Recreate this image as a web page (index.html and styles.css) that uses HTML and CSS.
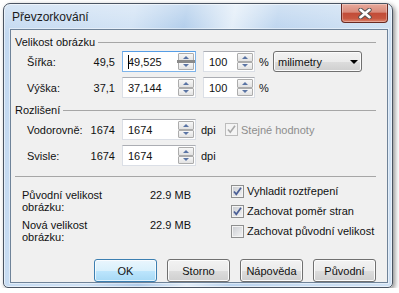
FILE: index.html
```html
<!DOCTYPE html>
<html lang="cs">
<head>
  <meta charset="UTF-8">
  <title>Převzorkování</title>
  <link rel="stylesheet" href="styles.css">
</head>
<body>
  <div class="window">
    <div class="titlebar">
      <span class="title">Převzorkování</span>
      <div class="close">
        <svg width="14" height="11" viewBox="0 0 14 11">
          <path d="M2.5 1.8 L11.5 9.2 M11.5 1.8 L2.5 9.2" stroke="#505050" stroke-width="4.4" stroke-linecap="round"/>
          <path d="M2.5 1.8 L11.5 9.2 M11.5 1.8 L2.5 9.2" stroke="#fff" stroke-width="2.6" stroke-linecap="round"/>
        </svg>
      </div>
    </div>

    <div class="client">
      <!-- velikost obrázku -->
      <div class="group-head"><span>Velikost obrázku</span><i class="rule"></i></div>
      <div class="row first">
        <span class="lbl">Šířka:</span><span class="val">49,5</span>
        <div class="spin wide focus">
          <span class="txt"><i class="caret"></i>49,525</span>
          <span class="arrows hover"><i class="arr up"></i><i class="arr down"></i></span>
        </div>
        <div class="spin narrow">
          <span class="txt">100</span>
          <span class="arrows"><i class="arr up"></i><i class="arr down"></i></span>
        </div>
        <span class="unit">%</span>
        <div class="combo">milimetry<i class="drop"></i></div>
      </div>
      <div class="row">
        <span class="lbl">Výška:</span><span class="val">37,1</span>
        <div class="spin wide">
          <span class="txt">37,144</span>
          <span class="arrows"><i class="arr up"></i><i class="arr down"></i></span>
        </div>
        <div class="spin narrow">
          <span class="txt">100</span>
          <span class="arrows"><i class="arr up"></i><i class="arr down"></i></span>
        </div>
        <span class="unit">%</span>
      </div>

      <!-- rozlišení -->
      <div class="group-head second"><span>Rozlišení</span><i class="rule"></i></div>
      <div class="row first">
        <span class="lbl">Vodorovně:</span><span class="val">1674</span>
        <div class="spin wide">
          <span class="txt">1674</span>
          <span class="arrows"><i class="arr up"></i><i class="arr down"></i></span>
        </div>
        <span class="dpi">dpi</span>
        <label class="check disabled">
          <span class="box"><svg width="11" height="11" viewBox="0 0 11 11"><path d="M2 5.5 L4.3 8.3 L9 1.8" fill="none" stroke="#a9a9a9" stroke-width="1.6"/></svg></span>
          Stejné hodnoty
        </label>
      </div>
      <div class="row">
        <span class="lbl">Svisle:</span><span class="val">1674</span>
        <div class="spin wide">
          <span class="txt">1674</span>
          <span class="arrows"><i class="arr up"></i><i class="arr down"></i></span>
        </div>
        <span class="dpi">dpi</span>
      </div>

      <div class="separator"></div>

      <div class="bottom">
        <div class="info">
          <div class="info-row">
            <span class="name">Původní velikost<br>obrázku:</span><span class="size">22.9 MB</span>
          </div>
          <div class="info-row">
            <span class="name">Nová velikost<br>obrázku:</span><span class="size">22.9 MB</span>
          </div>
        </div>
        <div class="options">
          <label class="check">
            <span class="box"><svg width="11" height="11" viewBox="0 0 11 11"><path d="M2 5.5 L4.3 8.3 L9 1.8" fill="none" stroke="#4b5f96" stroke-width="1.7"/></svg></span>
            Vyhladit roztřepení
          </label>
          <label class="check">
            <span class="box"><svg width="11" height="11" viewBox="0 0 11 11"><path d="M2 5.5 L4.3 8.3 L9 1.8" fill="none" stroke="#4b5f96" stroke-width="1.7"/></svg></span>
            Zachovat poměr stran
          </label>
          <label class="check">
            <span class="box"></span>
            Zachovat původní velikost
          </label>
        </div>
      </div>

      <div class="buttons">
        <button class="btn default">OK</button>
        <button class="btn">Storno</button>
        <button class="btn">Nápověda</button>
        <button class="btn">Původní</button>
      </div>
    </div>
  </div>
</body>
</html>
```

FILE: styles.css
```css
* {
  margin: 0;
  padding: 0;
  box-sizing: border-box;
}

body {
  background: #fff;
  font-family: "Liberation Sans", Arial, sans-serif;
  font-size: 11px;
  color: #111;
}

/* okno */
.window {
  margin: 3px 0 0 3px;
  width: 390px;
  height: 285px;
  border: 1px solid #4a5462;
  border-radius: 7px 7px 5px 5px;
  padding: 0 4px 4px 6px;
  display: flex;
  flex-direction: column;
  background:
    linear-gradient(rgba(255, 255, 255, 0.35), rgba(255, 255, 255, 0) 30px),
    linear-gradient(100deg, #c2d8f0 0%, #cfe1f4 30%, #aecbea 42%, #e2edf8 53%, #bad3ee 63%, #c9ddf2 80%, #cfe1f4 100%);
  box-shadow: inset 0 0 0 1px rgba(255, 255, 255, 0.55), 2px 2px 5px rgba(0, 0, 0, 0.45);
}

.titlebar {
  height: 27px;
  display: flex;
  align-items: flex-start;
}

.title {
  margin: 6px 0 0 2px;
  font-size: 12px;
  line-height: 15px;
  color: #1b1b1b;
}

.close {
  margin-left: auto;
  width: 47px;
  height: 19px;
  border: 1px solid #6a2a22;
  border-top: none;
  border-radius: 0 0 4px 4px;
  display: flex;
  align-items: center;
  justify-content: center;
  background: linear-gradient(#e8aa9c, #d98b7b 45%, #c24c38 52%, #c7563f 80%, #dd8670);
  box-shadow: inset 0 0 0 1px rgba(255, 255, 255, 0.3);
}

.client {
  flex: 1;
  border: 1px solid #6f8399;
  background: #f0f0f0;
  display: flex;
  flex-direction: column;
  box-shadow: 0 0 0 1px rgba(255, 255, 255, 0.45);
}

/* skupiny */
.group-head {
  display: flex;
  align-items: center;
  height: 16px;
  margin: 4px 11px 0 4px;
}

.group-head.second {
  margin-top: 4px;
}

.rule {
  flex: 1;
  margin-left: 3px;
  border-top: 1px solid #a6a6a6;
}

.row {
  display: flex;
  align-items: center;
  height: 21px;
  margin-top: 5px;
  padding-left: 16px;
}

.row.first {
  margin-top: 1px;
}

.lbl {
  width: 60px;
}

.val {
  width: 28px;
  text-align: right;
  margin-right: 7px;
}

/* číselná pole */
.spin {
  height: 21px;
  display: flex;
  align-items: center;
  background: #fff;
  border: 1px solid #dbdfe6;
  border-top-color: #abadb3;
}

.spin.focus {
  border-color: #7eb4ea;
  border-top-color: #569de5;
}

.spin.wide {
  width: 74px;
}

.spin.narrow {
  width: 52px;
  margin-left: 7px;
}

.txt {
  padding-left: 5px;
  position: relative;
}

.caret {
  position: absolute;
  left: 5px;
  top: -1px;
  width: 1px;
  height: 14px;
  background: #000;
}

.arrows {
  margin-left: auto;
  width: 17px;
  height: 100%;
  padding: 1px 1px 1px 0;
  display: flex;
  flex-direction: column;
  position: relative;
}

.arr {
  flex: 1;
  border: 1px solid #acacac;
  border-radius: 1px;
  background: linear-gradient(#f7f7f7, #e2e2e2);
  display: flex;
  align-items: center;
  justify-content: center;
}

.arr::before {
  content: "";
  border-left: 3px solid transparent;
  border-right: 3px solid transparent;
}

.up::before {
  border-bottom: 3px solid #5a74a4;
}

.down::before {
  border-top: 3px solid #5a74a4;
}

.arrows.hover::after {
  content: "";
  position: absolute;
  left: -1px;
  right: 0;
  top: 8px;
  height: 3px;
  background: #8a8a8a;
}

.unit {
  width: 18px;
  padding-left: 4px;
}

.combo {
  width: 89px;
  height: 21px;
  padding-left: 4px;
  display: flex;
  align-items: center;
  border: 1px solid #707070;
  border-radius: 3px;
  background: linear-gradient(#f2f2f2, #ebebeb 50%, #dddddd 50%, #cfcfcf);
  box-shadow: inset 0 0 0 1px #fbfbfb;
}

.drop {
  margin-left: auto;
  margin-right: 3px;
  border-left: 4px solid transparent;
  border-right: 4px solid transparent;
  border-top: 4px solid #000;
}

.dpi {
  width: 29px;
  padding-left: 5px;
}

/* zaškrtávátka */
.check {
  display: flex;
  align-items: center;
  gap: 3px;
}

.check.disabled {
  color: #8d8d8d;
}

.box {
  width: 13px;
  height: 13px;
  border: 1px solid #8e8f8f;
  display: flex;
  align-items: center;
  justify-content: center;
  background: linear-gradient(135deg, #c9ccd1, #f5f5f5);
  box-shadow: inset 0 0 0 1px #f4f4f4;
}

.disabled .box {
  border-color: #bcbcbc;
  background: #f4f4f4;
}

.separator {
  margin: 10px 11px 0 4px;
  border-top: 1px solid #a6a6a6;
}

.bottom {
  display: flex;
  margin-top: 4px;
}

.info {
  width: 220px;
  padding: 8px 0 0 11px;
  line-height: 12px;
}

.info-row {
  display: flex;
  margin-bottom: 6px;
}

.name {
  width: 128px;
}

.options {
  display: flex;
  flex-direction: column;
}

.options .check {
  height: 20px;
}

/* tlačítka */
.buttons {
  display: flex;
  justify-content: flex-end;
  gap: 10px;
  margin-top: 10px;
  padding-right: 11px;
}

.btn {
  width: 63px;
  height: 23px;
  font: inherit;
  color: #111;
  border: 1px solid #707070;
  border-radius: 3px;
  background: linear-gradient(#f2f2f2, #ebebeb 50%, #dddddd 50%, #cfcfcf);
  box-shadow: inset 0 0 0 1px #fcfcfc;
}

.btn.default {
  border-color: #3c7fb1;
  background: linear-gradient(#eaf6fd, #d9f0fc 50%, #bee6fd 50%, #a7d9f5);
  box-shadow: inset 0 0 0 1px rgba(255, 255, 255, 0.7);
}
```
